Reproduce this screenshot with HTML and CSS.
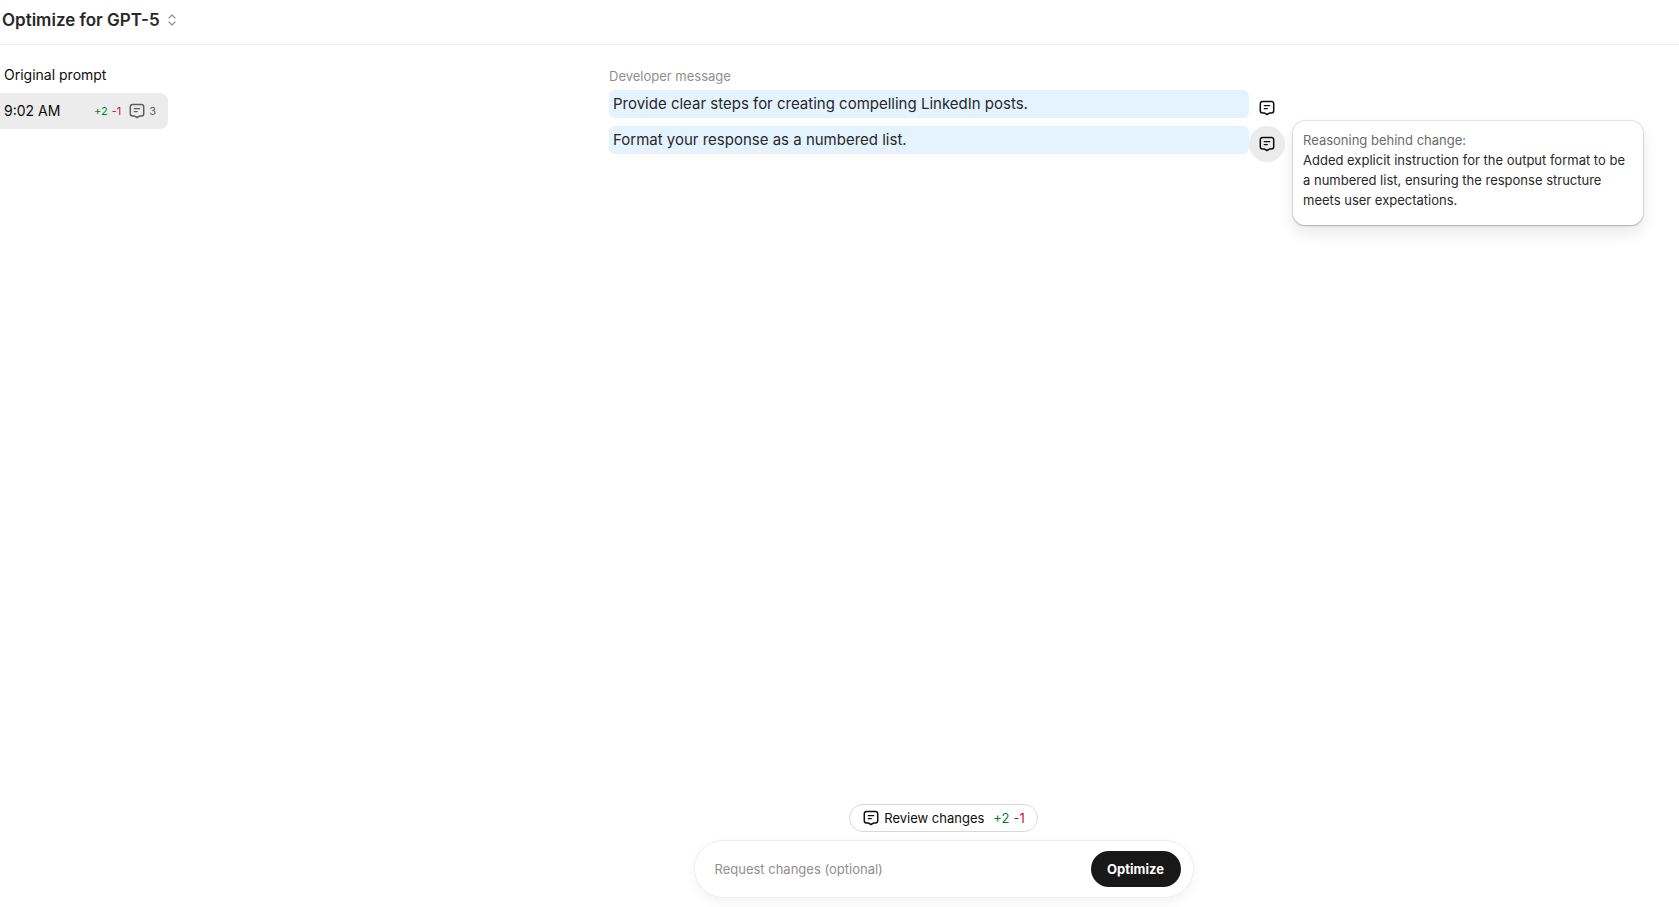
FILE: index.html
```html
<!DOCTYPE html>
<html lang="en">
<head>
    <meta charset="UTF-8">
    <meta name="viewport" content="width=device-width, initial-scale=1.0">
    <title>Optimize for GPT-5</title>
    <link rel="stylesheet" href="styles.css">
</head>
<body>

    <!-- Shared comment icon -->
    <svg class="sprite" aria-hidden="true">
        <symbol id="icon-comment" viewBox="0 0 16 16">
            <path d="M3.5 1.5h9a2.2 2.2 0 0 1 2.2 2.2v7a2.2 2.2 0 0 1-2.2 2.2h-1.7L8 14.5 5.2 12.9H3.5a2.2 2.2 0 0 1-2.2-2.2v-7a2.2 2.2 0 0 1 2.2-2.2z" stroke-width="1.5"/>
            <path d="M5.3 5.7h5.4M5.3 8.6h3" stroke-width="1.3"/>
        </symbol>
    </svg>

    <header class="header">
        <button type="button" class="title-btn">
            Optimize for GPT-5
            <svg class="chevrons" viewBox="0 0 8 12" aria-hidden="true">
                <path d="M1 4l3-3 3 3M1 8l3 3 3-3"/>
            </svg>
        </button>
    </header>

    <div class="layout">
        <nav class="sidebar">
            <a href="#original" class="version">Original prompt</a>
            <a href="#v1" class="version active">
                <span>9:02 AM</span>
                <span class="stats">
                    <span class="added">+2</span>
                    <span class="removed">-1</span>
                    <svg class="icon"><use href="#icon-comment"/></svg>
                    <span>3</span>
                </span>
            </a>
        </nav>

        <main class="main">
            <section class="message">
                <h2>Developer message</h2>
                <div class="line">
                    <p>Provide clear steps for creating compelling LinkedIn posts.</p>
                    <button type="button" class="comment-btn" aria-label="Show reasoning">
                        <svg class="icon"><use href="#icon-comment"/></svg>
                    </button>
                </div>
                <div class="line">
                    <p>Format your response as a numbered list.</p>
                    <button type="button" class="comment-btn active" aria-label="Show reasoning">
                        <svg class="icon"><use href="#icon-comment"/></svg>
                    </button>
                    <div class="popover" role="tooltip">
                        <div class="popover-title">Reasoning behind change:</div>
                        Added explicit instruction for the output format to be a numbered list, ensuring the response structure meets user expectations.
                    </div>
                </div>
            </section>

            <div class="footer">
                <button type="button" class="review-btn">
                    <svg class="icon"><use href="#icon-comment"/></svg>
                    <span>Review changes</span>
                    <span class="stats">
                        <span class="added">+2</span>
                        <span class="removed">-1</span>
                    </span>
                </button>
                <form class="request-form">
                    <input type="text" name="request" placeholder="Request changes (optional)" aria-label="Request changes">
                    <button type="submit" class="optimize-btn">Optimize</button>
                </form>
            </div>
        </main>
    </div>

</body>
</html>
```

FILE: styles.css
```css
/* Global Styles */
* {
    box-sizing: border-box;
}

body {
    font-family: Inter, "Liberation Sans", sans-serif;
    font-size: 13px;
    line-height: 20px;
    color: #0d0d0d;
    background: #fff;
    margin: 0;
    min-height: 100vh;
    display: flex;
    flex-direction: column;
    overflow-x: hidden;
}

button, input {
    font: inherit;
    color: inherit;
    background: none;
    border: none;
    padding: 0;
}

button {
    cursor: pointer;
}

.sprite {
    position: absolute;
    width: 0;
    height: 0;
}

.icon {
    width: 16px;
    height: 16px;
    flex: none;
    fill: none;
    stroke: currentColor;
    stroke-linecap: round;
    stroke-linejoin: round;
}

.added {
    color: #00862f;
}

.removed {
    color: #c8201c;
}

.stats {
    display: flex;
    align-items: center;
    gap: 4px;
}

/* Header */
.header {
    display: flex;
    align-items: center;
    height: 45px;
    padding: 0 2px 4px;
    border-bottom: 1px solid #ededed;
}

.title-btn {
    display: flex;
    align-items: center;
    gap: 8px;
    font-size: 17px;
    font-weight: 600;
    color: #282828;
}

.chevrons {
    width: 8px;
    height: 12px;
    fill: none;
    stroke: #8f8f8f;
    stroke-width: 1.2;
    stroke-linecap: round;
    stroke-linejoin: round;
}

/* Layout */
.layout {
    flex: 1;
    display: flex;
}

.sidebar {
    width: 208px;
    flex: none;
    padding: 12px 40px 0 0;
}

.version {
    display: flex;
    align-items: center;
    justify-content: space-between;
    height: 36px;
    padding: 0 12px 0 4px;
    border-radius: 0 8px 8px 0;
    font-size: 14px;
    color: inherit;
    text-decoration: none;
}

.version.active {
    background: #ececec;
}

.version .stats {
    font-size: 11px;
    color: #5d5d5d;
}

.version .icon {
    margin-left: 4px;
}

.main {
    flex: 1;
    display: flex;
    flex-direction: column;
    justify-content: space-between;
    align-items: center;
}

/* Message */
.message {
    width: 669px;
    padding: 21px 29px 0 0;
}

.message h2 {
    margin: 0 0 4px;
    font-size: 13px;
    font-weight: 400;
    color: #8f8f8f;
}

.line {
    position: relative;
    margin-bottom: 8px;
}

.line p {
    margin: 0;
    padding: 0 4px;
    font-size: 15px;
    line-height: 28px;
    color: #282828;
    background: #e5f3ff;
    border-radius: 6px;
}

.comment-btn {
    position: absolute;
    top: 0;
    left: 100%;
    display: flex;
    align-items: center;
    justify-content: center;
    width: 36px;
    height: 36px;
    border-radius: 50%;
}

.comment-btn.active {
    background: #ececec;
}

.popover {
    position: absolute;
    top: -5px;
    left: calc(100% + 44px);
    width: 350px;
    padding: 9px 10px 15px;
    color: #282828;
    background: #fff;
    border-radius: 12px;
    box-shadow: 0 0 0 1px rgba(0, 0, 0, 0.09), 0 1px 2px rgba(0, 0, 0, 0.18), 0 8px 16px rgba(0, 0, 0, 0.09);
}

.popover-title {
    color: #6b6b6b;
}

/* Footer */
.footer {
    display: flex;
    flex-direction: column;
    align-items: center;
    gap: 8px;
    padding-bottom: 9px;
}

.review-btn {
    display: flex;
    align-items: center;
    gap: 5px;
    height: 28px;
    padding: 0 12px 0 13px;
    border: 1px solid #d9d9d9;
    border-radius: 14px;
}

.review-btn .stats {
    margin-left: 4px;
}

.request-form {
    display: flex;
    align-items: center;
    width: 500px;
    padding: 10px 12px 10px 20px;
    border: 1px solid #ededed;
    border-radius: 30px;
    box-shadow: 0 4px 12px rgba(0, 0, 0, 0.05);
}

.request-form input {
    flex: 1;
    outline: none;
}

.request-form input::placeholder {
    color: #8f8f8f;
}

.optimize-btn {
    width: 90px;
    height: 36px;
    font-weight: 700;
    color: #fff;
    background: #181818;
    border-radius: 18px;
}
```
